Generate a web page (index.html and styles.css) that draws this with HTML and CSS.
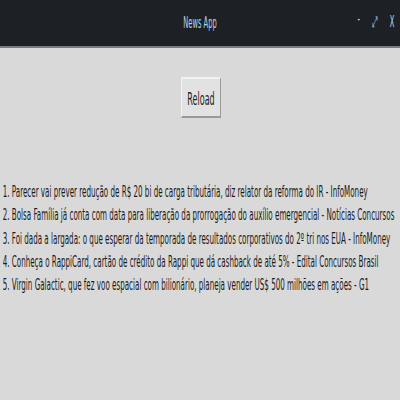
FILE: index.html
```html
<!DOCTYPE html>
<html>
<head>
<meta charset="utf-8">
<link rel="stylesheet" href="styles.css">
</head>
<body>
<div class="app">
  <header class="titlebar">
    <div class="spacer"></div>
    <svg class="title" viewBox="0 0 89.4 46" preserveAspectRatio="none"><text x="44.7" y="28" text-anchor="middle">News App</text></svg>
    <svg class="controls" viewBox="0 0 98.3 46" preserveAspectRatio="none">
      <text class="min" x="8" y="24">-</text>
      <text class="max" x="41" y="27">⤢</text>
      <text class="close" x="80" y="27">X</text>
    </svg>
  </header>
  <main class="content">
    <div class="actions">
      <button class="reload"><svg class="reload-label" viewBox="0 0 85 37" preserveAspectRatio="none"><text x="42.5" y="26" text-anchor="middle">Reload</text></svg></button>
    </div>
    <ol class="news">
      <li><svg class="line" viewBox="0 0 894 23.3" preserveAspectRatio="none"><text x="6" y="17">1. Parecer vai prever redução de R$ 20 bi de carga tributária, diz relator da reforma do IR - InfoMoney</text></svg></li>
      <li><svg class="line" viewBox="0 0 894 23.3" preserveAspectRatio="none"><text x="6" y="17">2. Bolsa Família já conta com data para liberação da prorrogação do auxílio emergencial - Notícias Concursos</text></svg></li>
      <li><svg class="line" viewBox="0 0 894 23.3" preserveAspectRatio="none"><text x="6" y="17">3. Foi dada a largada: o que esperar da temporada de resultados corporativos do 2º tri nos EUA - InfoMoney</text></svg></li>
      <li><svg class="line" viewBox="0 0 894 23.3" preserveAspectRatio="none"><text x="6" y="17">4. Conheça o RappiCard, cartão de crédito da Rappi que dá cashback de até 5% - Edital Concursos Brasil</text></svg></li>
      <li><svg class="line" viewBox="0 0 894 23.3" preserveAspectRatio="none"><text x="6" y="17">5. Virgin Galactic, que fez voo espacial com bilionário, planeja vender US$ 500 milhões em ações - G1</text></svg></li>
    </ol>
  </main>
</div>
</body>
</html>
```
FILE: styles.css
```css
html, body {
  margin: 0;
  padding: 0;
  overflow: hidden;
  background: #d9d9d9;
}
.app {
  width: 400px;
  height: 400px;
  font-family: "DejaVu Sans", sans-serif;
}
svg text {
  font-family: "DejaVu Sans", sans-serif;
}
.titlebar {
  height: 46px;
  background: #1d2125;
  border-bottom: 2px solid #7a7d80;
  display: grid;
  grid-template-columns: 1fr auto 1fr;
}
.title {
  display: block;
  width: 40px;
  height: 46px;
}
.title text {
  font-size: 15px;
  fill: #b9d3e6;
}
.controls {
  display: block;
  justify-self: end;
  width: 44px;
  height: 46px;
  margin-right: 2px;
}
.controls text {
  font-size: 15px;
  fill: #b9d3e6;
}
.content {
  display: flex;
  flex-direction: column;
}
.actions {
  display: flex;
  justify-content: center;
  padding-top: 29px;
}
.reload {
  display: block;
  width: 40px;
  height: 41px;
  margin-left: 2px;
  padding: 0;
  background: #e2e2e2;
  border-style: solid;
  border-width: 2px 1px;
  border-color: #f2f2f2 #9a9a9a #9a9a9a #f2f2f2;
}
.reload-label {
  display: block;
  width: 38px;
  height: 37px;
}
.reload-label text {
  font-size: 18px;
  fill: #222;
}
.news {
  list-style: none;
  margin: 62px 0 0 0;
  padding: 0;
}
.line {
  display: block;
  width: 400px;
  height: 23.3px;
}
.line text {
  font-size: 16px;
  fill: #1a1a1a;
}
```
